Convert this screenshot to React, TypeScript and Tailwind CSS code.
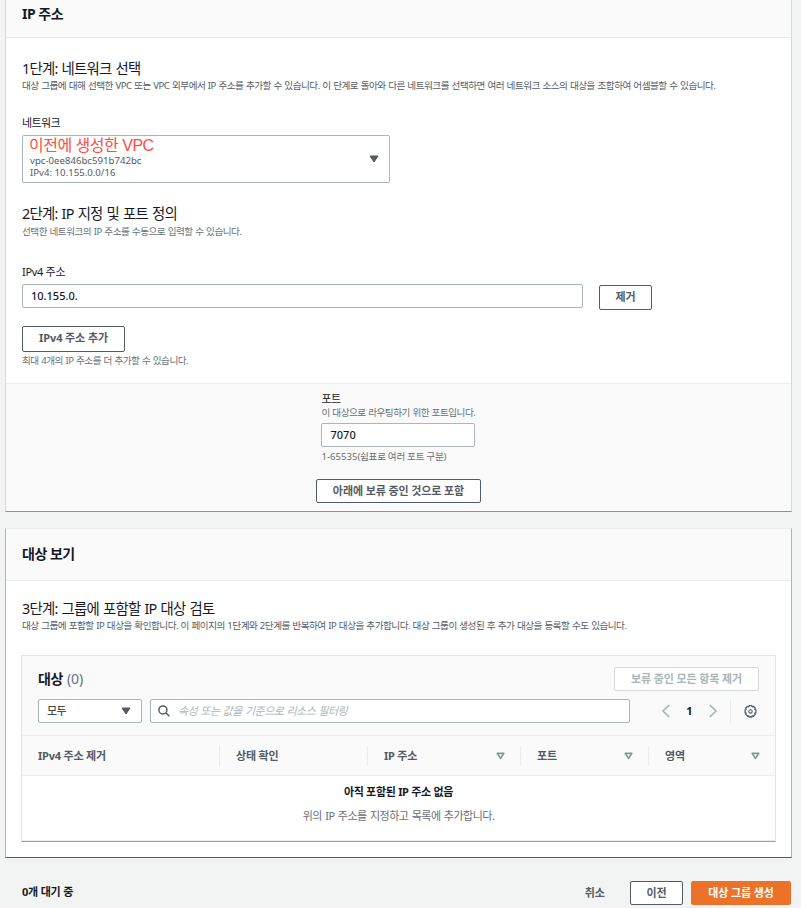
import type { ReactNode } from 'react'
import clsx from 'clsx'

interface TextProps {
    children: ReactNode
    className?: string
}

function Button({ children, className = '' }: TextProps) {
    return (
        <button
            className={clsx(
                'flex shrink-0 items-center justify-center rounded-[2px] border text-[11px] leading-4 font-bold tracking-[-0.1px] whitespace-nowrap',
                className
            )}
        >
            {children}
        </button>
    )
}

function StepTitle({ children, className = '' }: TextProps) {
    return (
        <h3 className={clsx('text-[14.4px] leading-5 tracking-[-0.75px] [word-spacing:1px]', className)}>{children}</h3>
    )
}

function Hint({ children, className = 'text-[#687078]' }: TextProps) {
    return (
        <p className={clsx('text-[9.6px] leading-[14px] tracking-[-0.5px] whitespace-nowrap [word-spacing:0.55px]', className)}>
            {children}
        </p>
    )
}

function CaretFilled() {
    return (
        <svg width="10" height="8" viewBox="0 0 10 8" className="shrink-0">
            <path d="M1 1h8L5 7z" fill="#545b64" stroke="#545b64" strokeLinejoin="round" />
        </svg>
    )
}

function CaretOutline() {
    return (
        <svg width="9" height="8" viewBox="0 0 9 8" className="shrink-0">
            <path d="M1.2 1.4h6.6L4.5 6.4z" fill="none" stroke="#879596" strokeWidth="1.7" strokeLinejoin="round" />
        </svg>
    )
}

function Chevron({ direction }: { direction: 'left' | 'right' }) {
    return (
        <svg width="8" height="14" viewBox="0 0 8 14" className="shrink-0">
            <path
                d={direction === 'left' ? 'M7.2 1.2 1 7l6.2 5.8' : 'M.8 1.2 7 7 .8 12.8'}
                fill="none"
                stroke="#aab7b8"
                strokeWidth="1.6"
            />
        </svg>
    )
}

function SearchIcon() {
    return (
        <svg width="12" height="12" viewBox="0 0 12 12" className="shrink-0">
            <circle cx="4.9" cy="4.9" r="4" fill="none" stroke="#545b64" strokeWidth="1.5" />
            <path d="m7.8 7.8 3.5 3.5" stroke="#545b64" strokeWidth="1.6" />
        </svg>
    )
}

function GearIcon() {
    return (
        <svg width="13" height="13" viewBox="0 0 13 13" className="shrink-0" fill="none" stroke="#545b64" strokeLinejoin="round">
            <path
                d="M5.2.7h2.6l.4 1.1 1.200-.5 1.900 1.900-.5 1.200 1.100.4v3l-1.100.4.5 1.200-1.900 1.900-1.200-.5-.4 1.200H5.200l-.4-1.200-1.200.5-1.900-1.900.5-1.200L1.100 7.800v-3l1.100-.4-.5-1.200 1.900-1.900 1.200.5z"
                strokeWidth="1.3"
            />
            <circle cx="6.5" cy="6.4" r="1.7" strokeWidth="1.1" />
        </svg>
    )
}

const columns = [
    { label: 'IPv4 주소 제거', width: 'w-[198px]', sortable: false },
    { label: '상태 확인', width: 'w-[148px]', sortable: false },
    { label: 'IP 주소', width: 'w-[153px]', sortable: true },
    { label: '포트', width: 'w-[128px]', sortable: true },
    { label: '영역', width: 'w-[126px]', sortable: true },
]

function IpAddressPanel() {
    return (
        <section className="h-[512px] border-x border-b border-x-[#d5dbdb] border-b-[#879596] bg-white">
            <header className="h-[38px] border-b border-[#eaeded] bg-[#fafafa] px-4 pt-1">
                <h2 className="text-[14px] leading-5 font-bold tracking-[-0.5px]">IP 주소</h2>
            </header>

            <div className="h-[345px] px-4 pt-[21px]">
                <StepTitle>1단계: 네트워크 선택</StepTitle>
                <Hint className="text-[#545b64]">
                    대상 그룹에 대해 선택한 VPC 또는 VPC 외부에서 IP 주소를 추가할 수 있습니다. 이 단계로 돌아와 다른 네트워크를 선택하면 여러 네트워크 소스의 대상을 조합하여 어셈블할 수 있습니다.
                </Hint>

                {/* Network select */}
                <div className="mt-[22px] text-[11px] leading-4 tracking-[-0.6px]">네트워크</div>
                <div className="mt-1 flex h-12 w-[368px] items-center justify-between rounded-[2px] border border-[#aab7b8] pr-[10px] pl-[7px]">
                    <div className="pb-1 text-[9.65px] leading-3 text-[#545b64]">
                        <div className="-ml-px h-[19px] font-['Liberation_Sans','Noto_Sans_CJK_KR',sans-serif] text-[16px] leading-[19px] tracking-[-0.5px] text-[#ff4b45]">
                            이전에 생성한 VPC
                        </div>
                        <div>vpc-0ee846bc591b742bc</div>
                        <div>IPv4: 10.155.0.0/16</div>
                    </div>
                    <CaretFilled />
                </div>

                <StepTitle className="mt-[21px]">2단계: IP 지정 및 포트 정의</StepTitle>
                <div className="mt-px">
                    <Hint>선택한 네트워크의 IP 주소를 수동으로 입력할 수 있습니다.</Hint>
                </div>

                {/* IPv4 address row */}
                <div className="mt-[25px] text-[11px] leading-4 tracking-[-0.3px]">IPv4 주소</div>
                <div className="mt-1 flex gap-4">
                    <div className="flex h-6 w-[561px] items-center rounded-[2px] border border-[#aab7b8] px-2 text-[11px] font-medium">
                        10.155.0.
                    </div>
                    <Button className="mt-px h-[25px] w-[53px] border-[#545b64] bg-white pb-0.5 text-[#545b64]">제거</Button>
                </div>
                <Button className="mt-4 h-[26px] w-[103px] border-[#545b64] bg-white pb-0.5 text-[#545b64]">IPv4 주소 추가</Button>
                <div className="mt-[2px]">
                    <Hint>최대 4개의 IP 주소를 더 추가할 수 있습니다.</Hint>
                </div>
            </div>

            {/* Port */}
            <div className="flex h-32 flex-col items-center border-t border-[#eaeded] bg-[#fafafa] pt-[7px]">
                <div className="mr-[2px] w-[154px]">
                    <div className="pl-px text-[11px] leading-4 tracking-[-0.6px]">포트</div>
                    <div className="-mt-px pl-px">
                        <Hint>이 대상으로 라우팅하기 위한 포트입니다.</Hint>
                    </div>
                    <div className="mt-[3px] flex h-6 items-center rounded-[2px] border border-[#aab7b8] bg-white px-[9px] text-[11px] font-medium">
                        7070
                    </div>
                    <p className="mt-[3px] pl-px text-[9.6px] leading-[14px] text-[#687078]">
                        1-65535<span className="tracking-[-0.3px]">(쉼표로 여러 포트 구분)</span>
                    </p>
                </div>
                <Button className="mt-[15px] h-6 w-[165px] border-[#545b64] bg-white text-[#545b64]">아래에 보류 중인 것으로 포함</Button>
            </div>
        </section>
    )
}

function TargetTable() {
    return (
        <div className="mt-[22px] h-[187px] border border-[#e1e5e5] border-b-[#95a2a3]">
            <div className="h-[79px] bg-[#fafafa] px-4 pt-[11px]">
                <div className="flex items-center justify-between">
                    <h2 className="text-[14px] leading-6 font-bold tracking-[-0.5px]">
                        대상 <span className="ml-px font-normal tracking-normal text-[#687078]">(0)</span>
                    </h2>
                    <Button className="h-6 w-[145px] border-[#d5dbdb] bg-white text-[#aab7b8]">보류 중인 모든 항목 제거</Button>
                </div>
                <div className="mt-2 flex h-6 items-center">
                    <div className="flex h-6 w-[104px] items-center justify-between rounded-[2px] border border-[#aab7b8] bg-white pr-[10px] pl-2 text-[11px] tracking-[-0.5px]">
                        모두
                        <CaretFilled />
                    </div>
                    <div className="ml-2 flex h-6 w-[480px] items-center gap-2 rounded-[2px] border border-[#aab7b8] bg-white px-[7px]">
                        <SearchIcon />
                        <span className="text-[11px] tracking-[-0.5px] text-[#aab7b8] italic [word-spacing:0.7px]">
                            속성 또는 값을 기준으로 리소스 필터링
                        </span>
                    </div>
                    <div className="ml-8 flex h-6 items-center">
                        <Chevron direction="left" />
                        <span className="w-[39px] text-center text-[11px] font-bold">1</span>
                        <Chevron direction="right" />
                        <div className="ml-[13px] h-6 w-px bg-[#eaeded]" />
                        <div className="ml-[13px]">
                            <GearIcon />
                        </div>
                    </div>
                </div>
            </div>

            <div className="flex h-[41px] items-center border-y border-[#eaeded] bg-[#fafafa]">
                {columns.map((column, i) => (
                    <div
                        key={column.label}
                        className={clsx(
                            'flex h-5 items-center justify-between pr-[15px] pl-4 text-[11px] leading-4 font-bold tracking-[-0.2px] text-[#545b64]',
                            column.width,
                            i < columns.length - 1 && 'border-r border-[#eaeded]'
                        )}
                    >
                        {column.label}
                        {column.sortable && <CaretOutline />}
                    </div>
                ))}
            </div>

            <div className="h-[65px] border-b border-[#eaeded] pt-2 text-center text-[11px] leading-4">
                <p className="font-bold tracking-[-0.3px]">아직 포함된 IP 주소 없음</p>
                <p className="mt-2 tracking-[-0.5px] text-[#687078] [word-spacing:0.9px]">위의 IP 주소를 지정하고 목록에 추가합니다.</p>
            </div>
        </div>
    )
}

function ReviewPanel() {
    return (
        <section className="mt-4 h-[330px] border border-x-[#aab7b8] border-t-[#eaeded] border-b-[#545b64] bg-white">
            <header className="h-[52px] border-b border-[#eaeded] bg-[#fafafa] px-4 pt-[15px]">
                <h2 className="text-[14px] leading-5 font-bold tracking-[-0.5px]">대상 보기</h2>
            </header>
            <div className="px-[15px] pt-[18px]">
                <div className="pl-px">
                    <StepTitle>3단계: 그룹에 포함할 IP 대상 검토</StepTitle>
                    <Hint className="text-[#545b64]">
                        대상 그룹에 포함할 IP 대상을 확인합니다. 이 페이지의 1단계와 2단계를 반복하여 IP 대상을 추가합니다. 대상 그룹이 생성된 후 추가 대상을 등록할 수도 있습니다.
                    </Hint>
                </div>
                <TargetTable />
            </div>
        </section>
    )
}

export default function App() {
    return (
        <div className="h-[908px] w-[801px] overflow-hidden bg-[#f2f3f3] pr-[9px] pl-[5px] font-['Noto_Sans','Noto_Sans_CJK_KR',sans-serif] text-[#16191f]">
            <IpAddressPanel />
            <ReviewPanel />

            <footer className="mt-[23px] flex h-6 items-center pr-px pl-[17px] text-[11px] leading-[22px]">
                <span className="pb-0.5 font-bold tracking-[-0.2px]">0개 대기 중</span>
                <span className="ml-auto font-bold text-[#545b64]">취소</span>
                <Button className="ml-[25px] h-6 w-[53px] border-[#545b64] bg-white text-[#545b64]">이전</Button>
                <Button className="ml-2 h-6 w-[100px] border-[#ec7229] bg-[#ec7229] text-white">대상 그룹 생성</Button>
            </footer>
        </div>
    )
}
